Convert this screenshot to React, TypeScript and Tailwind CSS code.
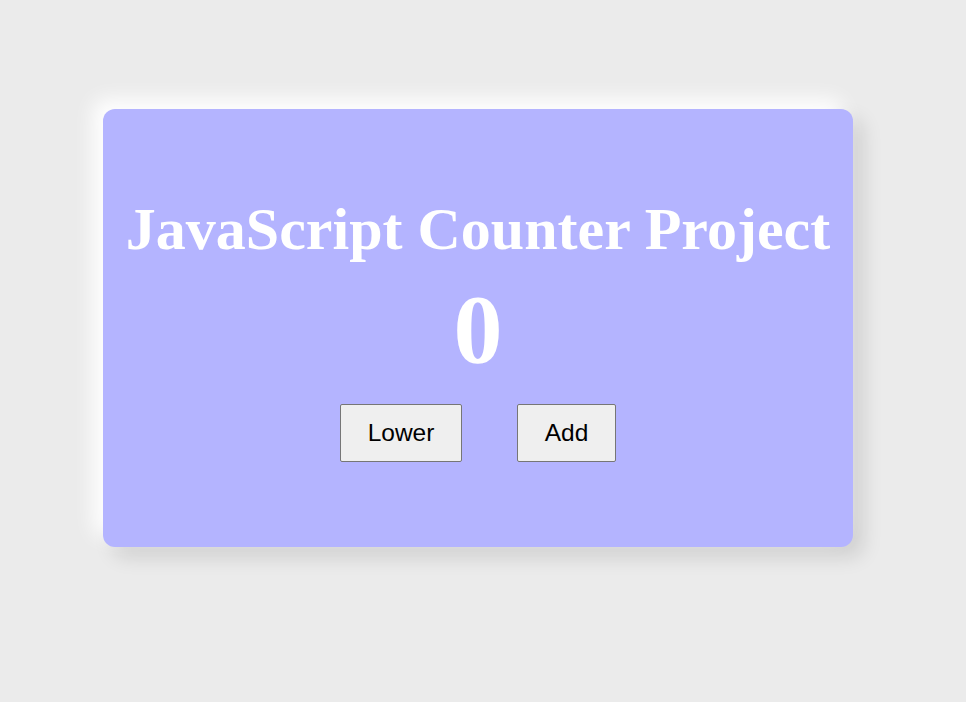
import { useState } from "react";

export default function App() {
  const [count, setCount] = useState(0);

  return (
    <div className="min-h-screen bg-[#ebebeb] pt-[109px] pl-[103px]">
      <div className="w-[750px] h-[438px] rounded-xl bg-[#b4b4ff] shadow-[-10px_-10px_20px_#ffffff,10px_10px_20px_rgba(0,0,0,0.12)] flex flex-col items-center pt-[84px]">
        <h1 className="font-['Liberation_Serif',serif] font-bold text-white text-[60px] leading-[72px]">
          JavaScript Counter Project
        </h1>
        <div className="font-['Liberation_Serif',serif] font-bold text-white text-[98px] leading-[110px] mt-[9px]">
          {count}
        </div>
        <div className="flex gap-[55px] mt-[20px] font-['Liberation_Sans',Arial,sans-serif]">
          <button
            onClick={() => setCount((c) => c - 1)}
            className="bg-[#efefef] border border-[#767676] rounded-[2px] w-[122px] h-[58px] text-[24.5px] text-black"
          >
            Lower
          </button>
          <button
            onClick={() => setCount((c) => c + 1)}
            className="bg-[#efefef] border border-[#767676] rounded-[2px] w-[99px] h-[58px] text-[24.5px] text-black"
          >
            Add
          </button>
        </div>
      </div>
    </div>
  );
}
